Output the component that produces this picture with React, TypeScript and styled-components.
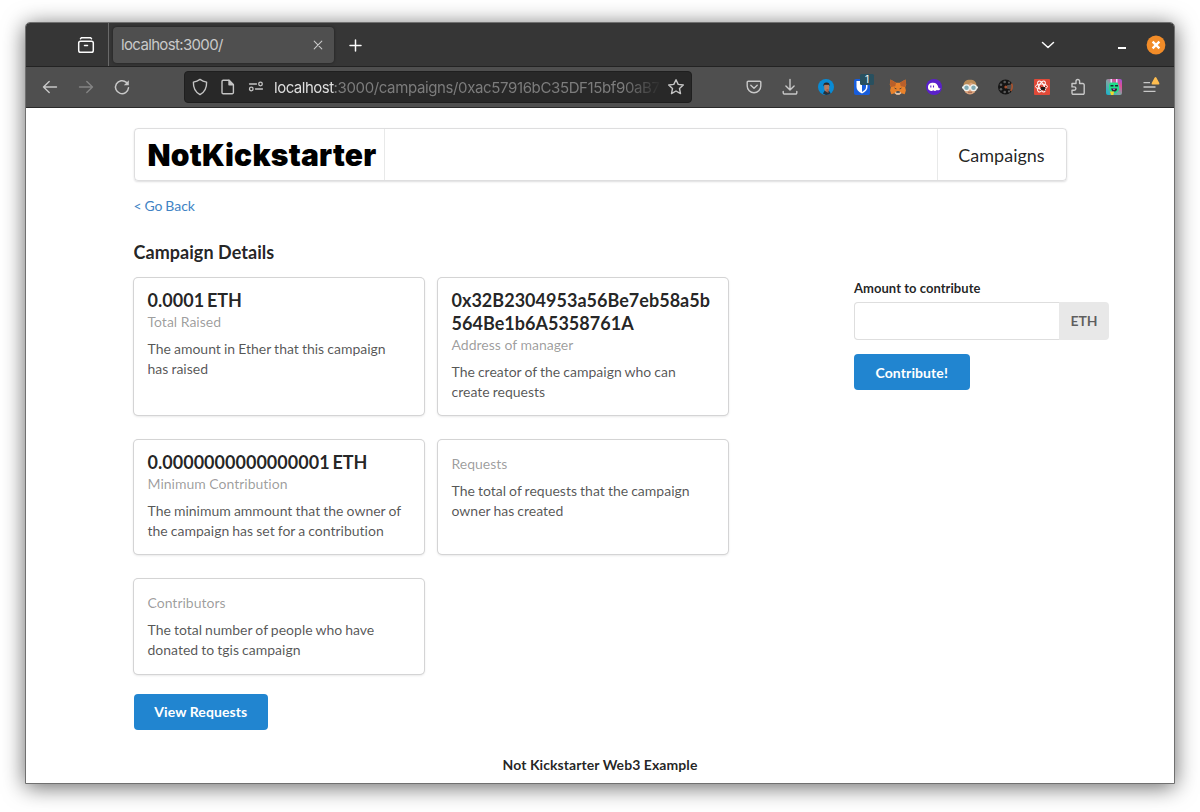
import React from 'react';
import styled, { createGlobalStyle } from 'styled-components';

const GlobalStyle = createGlobalStyle`
  *, *::before, *::after { box-sizing: border-box; }
  body {
    margin: 0;
    background: #fff;
    font-family: Lato, "Liberation Sans", sans-serif;
    font-size: 14px;
    line-height: 20px;
    font-variant-ligatures: none;
    color: rgba(0, 0, 0, 0.87);
  }
  h2, h3, h5, p { margin: 0; }
`;

/* ---------- browser window ---------- */

const Desktop = styled.div`
  height: 812px;
  padding: 22px 25px 28px;
  overflow: hidden;
`;

const Window = styled.div`
  height: 762px;
  display: flex;
  flex-direction: column;
  border: 1px solid #707070;
  border-radius: 5px 5px 0 0;
  overflow: hidden;
  background: #fff;
  box-shadow: 0 3px 22px rgba(0, 0, 0, 0.6);
`;

const TabBar = styled.div`
  height: 44px;
  display: flex;
  align-items: center;
  background: #363636;
  border-bottom: 1px solid #232323;
  color: #fbfbfb;
`;

const TabOverview = styled.div`
  width: 83px;
  height: 100%;
  display: flex;
  align-items: center;
  justify-content: flex-end;
  padding-right: 13px;
  border-right: 1px solid #696969;
`;

const Tab = styled.div`
  width: 221px;
  height: 36px;
  margin-left: 4px;
  padding: 0 10px 0 8px;
  display: flex;
  align-items: center;
  justify-content: space-between;
  border-radius: 4px;
  background: #4f4f4f;
  box-shadow: 0 0 3px rgba(0, 0, 0, 0.45);
  color: #c9c9c9;
`;

const TabTitle = styled.span`
  font-family: Inter, Roboto, sans-serif;
  font-size: 15px;
  letter-spacing: -0.65px;
`;

const NewTab = styled.div`
  display: flex;
  margin-left: 13px;
`;

const WindowControls = styled.div`
  margin-left: auto;
  display: flex;
  align-items: center;
  padding-right: 8px;
`;

const ControlSlot = styled.div<{ $gap: number }>`
  display: flex;
  margin-left: ${(p) => p.$gap}px;
`;

const NavBar = styled.div`
  height: 41px;
  display: flex;
  align-items: center;
  padding: 0 6px;
  background: #4f4f4f;
  border-bottom: 1px solid #2a2a2a;
`;

const ToolButton = styled.div<{ $dim?: boolean }>`
  width: 36px;
  height: 36px;
  display: grid;
  place-items: center;
  color: ${(p) => (p.$dim ? '#848484' : '#c8c8c8')};
`;

const AddressBar = styled.div`
  width: 508px;
  height: 32px;
  margin: 0 auto 0 44px;
  display: flex;
  align-items: center;
  border: 1px solid #1f1f1f;
  border-radius: 4px;
  background: #282828;
  color: #c4c4c4;
`;

const AddressIcon = styled.div`
  width: 28px;
  display: grid;
  place-items: center;
  &:first-child { margin-left: 1px; }
`;

const Url = styled.div`
  width: 388px;
  margin-left: 4px;
  padding-top: 2px;
  white-space: nowrap;
  font-family: Inter, Roboto, sans-serif;
  font-size: 15px;
  letter-spacing: -0.37px;
  color: #7c7c7c;
  mask-image: linear-gradient(to right, #000 350px, transparent 388px);
`;

const Host = styled.span`
  letter-spacing: -0.5px;
  color: #dedede;
`;

/* ---------- page ---------- */

const Page = styled.main`
  flex: 1;
  padding: 20px 65px 0 108px;
`;

const Menu = styled.nav`
  width: 933px;
  height: 53px;
  display: flex;
  justify-content: space-between;
  border: 1px solid rgba(34, 36, 38, 0.15);
  border-radius: 4px;
  box-shadow: 0 1px 2px rgba(34, 36, 38, 0.15);
`;

const Brand = styled.div`
  width: 250px;
  padding-left: 12.5px;
  display: flex;
  align-items: center;
  border-right: 1px solid rgba(34, 36, 38, 0.1);
  font-family: Inter, Lato, sans-serif;
  font-size: 30px;
  font-weight: 900;
  letter-spacing: 0.2px;
  line-height: 50px;
  white-space: nowrap;
  color: #000;
`;

const MenuItem = styled.div`
  width: 129px;
  padding-right: 1px;
  display: flex;
  align-items: center;
  justify-content: center;
  border-left: 1px solid rgba(34, 36, 38, 0.1);
  font-size: 18px;
`;

const BackLink = styled.a`
  display: block;
  margin: 15px 0 0 -0.5px;
  word-spacing: -0.8px;
  color: #4183c4;
`;

const PageTitle = styled.h3`
  margin: 24px 0 0 -0.5px;
  font-size: 18px;
  line-height: 24px;
  font-weight: 700;
  letter-spacing: 0.05px;
`;

const Columns = styled.div`
  display: flex;
  margin-top: 14px;
`;

const CardGrid = styled.div`
  width: 594px;
  display: grid;
  grid-template-columns: 290px 290px;
  column-gap: 14px;
  row-gap: 25px;
`;

const Card = styled.article`
  padding: 14px 14px 14px 13.5px;
  border-radius: 4px;
  box-shadow: 0 1px 3px 0 #d4d4d5, 0 0 0 1px #d4d4d5;
`;

const CardHeader = styled.h2`
  margin: -3px 0 -0.5px;
  font-size: 18px;
  line-height: 23.14px;
  font-weight: 700;
  word-spacing: -1.6px;
  letter-spacing: 0.02px;
  overflow-wrap: anywhere;
`;

const CardMeta = styled.div`
  color: rgba(0, 0, 0, 0.4);
`;

const CardText = styled.p`
  margin: 7px 4px 0 0;
  word-spacing: -0.5px;
  color: rgba(0, 0, 0, 0.68);

  ${CardHeader} ~ & {
    margin-bottom: -0.6px;
  }
`;

const Form = styled.form`
  width: 255px;
  margin-left: 126px;
  padding-top: 1px;
`;

const Label = styled.label`
  display: block;
  font-size: 13px;
  line-height: 19px;
  font-weight: 700;
  margin-bottom: 4px;
  letter-spacing: 0.04px;
`;

const InputGroup = styled.div`
  display: flex;
  height: 38px;
  margin-bottom: 14px;
`;

const Input = styled.input`
  width: 205px;
  padding: 9px 14px;
  border: 1px solid rgba(34, 36, 38, 0.15);
  border-right: 0;
  border-radius: 4px 0 0 4px;
  outline: 0;
  background: #fff;
  font: inherit;
`;

const Unit = styled.div`
  width: 50px;
  display: grid;
  place-items: center;
  border-radius: 0 4px 4px 0;
  background: #e8e8e8;
  color: rgba(0, 0, 0, 0.6);
  font-weight: 700;
`;

const Button = styled.button<{ $width: number; $drop?: number }>`
  display: block;
  width: ${(p) => p.$width}px;
  height: 36px;
  padding: ${(p) => p.$drop ?? 0}px 0.5px 0 0;
  border: 0;
  border-radius: 4px;
  background: #2185d0;
  color: #fff;
  font: 700 14px/14px Lato, sans-serif;
  font-variant-ligatures: none;
  letter-spacing: 0.1px;
`;

const Actions = styled.div`
  margin-top: 20px;
`;

const Footer = styled.h5`
  width: 932px;
  margin-top: 25px;
  font-size: 14px;
  line-height: 20px;
  font-weight: 700;
  letter-spacing: 0.07px;
  text-align: center;
`;

/* ---------- icons ---------- */

type IconProps = { w?: number; h?: number; sw?: number; children: React.ReactNode };

const Icon = ({ w = 18, h = 18, sw = 1.4, children }: IconProps) => (
  <svg
    width={w}
    height={h}
    viewBox={`0 0 ${w} ${h}`}
    fill="none"
    stroke="currentColor"
    strokeWidth={sw}
    strokeLinecap="round"
    strokeLinejoin="round"
    display="block"
  >
    {children}
  </svg>
);

const ArchiveIcon = () => (
  <Icon sw={1.5}>
    <path d="M3.500 2.800 4.400 1.800h9.200l.9 1" />
    <rect x="1.700" y="5.200" width="14.600" height="11" rx="1.800" />
    <path d="M7.500 9.500h3" />
  </Icon>
);

const BackIcon = () => <Icon><path d="M15.500 9H2.500M8.200 3.500 2.500 9l5.700 5.500" /></Icon>;
const ForwardIcon = () => <Icon><path d="M2.500 9h13M9.800 3.500 15.500 9l-5.700 5.500" /></Icon>;

const ReloadIcon = () => (
  <Icon sw={1.5}>
    <path d="M15.500 9.800A6.500 6.500 0 1 1 13.400 4.400" />
    <path d="M15.800 2.200v5h-5z" fill="currentColor" stroke="none" />
  </Icon>
);

const ShieldIcon = () => (
  <Icon><path d="M9 1.400c2 1.500 4 2.300 6.600 2.700.2 5.400-1.400 9.800-6.600 12.500C3.800 13.900 2.200 9.500 2.400 4.100 5 3.700 7 2.900 9 1.400z" /></Icon>
);

const PageIcon = () => (
  <Icon>
    <path d="M4.200 2.200h5.700l4.500 4.500v7.800a1.200 1.200 0 0 1-1.200 1.200h-9A1.200 1.200 0 0 1 3 14.500V3.400a1.200 1.200 0 0 1 1.200-1.200z" />
    <path d="M10 2.200v4.500h4.400z" fill="currentColor" />
  </Icon>
);

const PermissionsIcon = () => (
  <Icon sw={1.3}>
    <path d="M2.500 6h7M8.500 11h7" />
    <circle cx="13.500" cy="6" r="1.800" />
    <circle cx="4.300" cy="11" r="1.800" />
  </Icon>
);

const StarIcon = () => (
  <Icon><path d="m9 1.700 2.200 4.700 5.100.6-3.800 3.500 1 5.100L9 13l-4.500 2.600 1-5.100L1.700 7l5.100-.6z" /></Icon>
);

const PocketIcon = () => (
  <Icon>
    <path d="M3.200 3.200h11.600a1 1 0 0 1 1 1V8a6.800 6.800 0 0 1-13.600 0V4.200a1 1 0 0 1 1-1z" />
    <path d="m5.800 7.300 3.200 3 3.200-3" />
  </Icon>
);

const DownloadIcon = () => (
  <Icon><path d="M9 1.500v10.300M4.900 8 9 12l4.100-4M2.200 13.500v1.300a1.200 1.200 0 0 0 1.200 1.200h11.200a1.200 1.200 0 0 0 1.200-1.200v-1.300" /></Icon>
);

const PuzzleIcon = () => (
  <Icon>
    <path d="M3 5.500h4V3.300a1.800 1.800 0 0 1 3.600 0v2.200h3.200a1.400 1.400 0 0 1 1.400 1.400v8.200a1.200 1.200 0 0 1-1.200 1.200H4.200A1.200 1.200 0 0 1 3 15.100v-2.800h2.200a1.700 1.700 0 0 0 0-3.400H3z" />
  </Icon>
);

const AvatarIcon = () => (
  <svg width="16" height="16" viewBox="0 0 16 16">
    <circle cx="8" cy="8" r="8" fill="#098bd5" />
    <path d="M5 14.500 6.700 11.500h4l2 2.800A8 8 0 0 1 8 16z" fill="#24313c" />
    <path d="M6.200 5.500h5v4.200c0 2-1.100 3-2.400 3S6.200 11.500 6.200 9.500z" fill="#b57c61" />
    <path d="M5.500 7.500C5 4.700 6.200 3.500 8.500 3.500c2.600 0 3.500 1.300 3 3.800l-.8-1.500H6.500z" fill="#30221f" />
    <path d="M8.500 10h2v4l-2-1z" fill="#a3624b" />
  </svg>
);

const VaultIcon = () => (
  <svg width="26" height="26" viewBox="0 0 26 26">
    <rect x="5" y="5" width="16" height="16" rx="2" fill="#175ddc" />
    <path d="M7.500 7h11v6c0 3-2.200 5-5.500 6.600C9.700 18 7.500 16 7.500 13z" fill="#fff" />
    <path d="M13 8.600h4V13c0 2-1.500 3.600-4 4.900z" fill="#175ddc" />
    <rect x="11" y="0" width="14" height="11" rx="1.500" fill="#28505f" />
    <text x="18" y="9.200" fill="#fff" fontSize="10" fontFamily="Inter, sans-serif" textAnchor="middle">1</text>
  </svg>
);

const FoxIcon = () => (
  <svg width="18" height="18" viewBox="0 0 18 18">
    <path d="m1.500 1.500 5.600 3.200h3.800l5.600-3.200.7 5-1 2.800.7 3.200-1.200 3.700-3.300-.9-2 1.500H7.600l-2-1.500-3.300.9L1.100 12.500l.7-3.200-1-2.800z" fill="#e9822b" />
    <path d="m1.500 1.500 5.600 3.200-.8 3.600-4.200.8L.8 6.500zM16.500 1.500l-5.600 3.200.8 3.600 4.200.8 1.300-2.600z" fill="#b9602b" />
    <path d="m5.600 15.300 1.500-1.800h3.800l1.500 1.800-2 1.500H7.600z" fill="#d9c5b4" />
    <path d="m4.800 9.500 2.600 1-.2 1zM13.200 9.500l-2.600 1 .2 1zM7.400 13.200h3.200l.2 1.600H7.200z" fill="#273440" />
  </svg>
);

const GhostIcon = () => (
  <svg width="16" height="16" viewBox="0 0 16 16">
    <circle cx="8" cy="8" r="8" fill="#5a20cb" />
    <path d="M2 8.300C2 5 4.200 3.700 7 3.700c3.200 0 4.800 2 5.300 4.600.3 1 1 1.300 2.200 1.100-.8 1.700-2.200 2.300-3.700 1.600-1.300 1.500-2.700 1-3.500.3-1.300 1-2.600.7-3.200.1C2.700 11.600 2 10 2 8.300z" fill="#fffdf8" />
    <path d="M4.800 6.500v2M7.500 6.500v2" stroke="#5a20cb" strokeWidth="1.100" />
  </svg>
);

const GogglesIcon = () => (
  <svg width="16" height="16" viewBox="0 0 16 16">
    <ellipse cx="8" cy="8.500" rx="6.500" ry="7" fill="#d9a27c" />
    <path d="M1.500 7.500C1.300 2.500 4 .8 8 .8s6.700 1.700 6.500 6.700C12 6 10.500 4.500 9 3.500 7 5.300 4 6 1.500 7.500z" fill="#b98b58" />
    <path d="M0 7.500h16v2H0z" fill="#e5eceb" />
    <circle cx="4.500" cy="8.700" r="2.900" fill="#7fa9b3" stroke="#f1f3f0" strokeWidth="1.300" />
    <circle cx="11.500" cy="8.700" r="2.900" fill="#7fa9b3" stroke="#f1f3f0" strokeWidth="1.300" />
    <path d="M6 13.200h4" stroke="#9a5c48" />
  </svg>
);

const ReelIcon = () => (
  <svg width="16" height="16" viewBox="0 0 16 16">
    <circle cx="7.500" cy="8" r="7.500" fill="#151515" />
    <path d="M9 6.200 15 5v6L9 9.800z" fill="#4f4f4f" />
    <g fill="#5c5c5c">
      <circle cx="6.700" cy="3" r="1.300" />
      <circle cx="3" cy="5.700" r="1.300" />
      <circle cx="3" cy="10.300" r="1.300" />
      <circle cx="6.700" cy="13" r="1.300" />
      <circle cx="11" cy="3.600" r="1.100" />
      <circle cx="11" cy="12.400" r="1.100" />
    </g>
    <circle cx="7.800" cy="8" r="1.500" fill="#a75130" />
    <path d="M13.500 4.500c1.200 2.500.9 5-.8 7.500" fill="none" stroke="#a8532e" strokeWidth="1.700" />
  </svg>
);

const AtomIcon = () => (
  <svg width="16" height="16" viewBox="0 0 16 16">
    <rect width="16" height="16" rx="1" fill="#e04938" />
    <g fill="none" stroke="#fff" strokeWidth="1">
      <ellipse cx="7.500" cy="7.500" rx="6" ry="2.500" />
      <ellipse cx="7.500" cy="7.500" rx="6" ry="2.500" transform="rotate(60 7.500 7.500)" />
      <ellipse cx="7.500" cy="7.500" rx="6" ry="2.500" transform="rotate(120 7.500 7.500)" />
    </g>
    <ellipse cx="9" cy="9.500" rx="2.500" ry="1.800" fill="#231917" />
    <path d="m6.500 7.500 2 2M11.500 7.500l-2 2M6.500 11.500l2-1.500M11.500 12l-2-2" stroke="#231917" strokeWidth="1" />
  </svg>
);

const PixelPetIcon = () => (
  <svg width="16" height="16" viewBox="0 0 16 16">
    <defs>
      <linearGradient id="pet" x1="0" y1="1" x2="1" y2="0">
        <stop offset="0" stopColor="#0eb5cf" />
        <stop offset=".45" stopColor="#79a9a5" />
        <stop offset=".75" stopColor="#df4e98" />
        <stop offset="1" stopColor="#9651dd" />
      </linearGradient>
    </defs>
    <rect width="16" height="16" rx="2" fill="url(#pet)" />
    <path d="M4 3.500h8V5l1 2v4l-3 3H6l-3-3V6z" fill="#20df8c" />
    <path d="M4.500 0H6v3.500H4.500zM10 0h1.500v3.500H10z" fill="#e2dfff" />
    <path d="M4.500 6h3v1.600h-3zM9 6h3v1.600H9z" fill="#182a32" />
    <path d="M5 9.500h6v1.500L9.500 12.500h-3z" fill="#351f35" />
    <path d="M7 9.700h2v1H7z" fill="#c67cf0" />
    <path d="M4 12.500h4L7.500 16H5z" fill="#efd72d" />
  </svg>
);

const MenuAlertIcon = () => (
  <svg width="24" height="26" viewBox="0 0 24 26">
    <path d="M5.500 8.700H12M5.500 13h12M5.500 17.300h12" stroke="#c8c8c8" strokeWidth="1.300" />
    <path d="M16.700 3.500a.9.9 0 0 1 1.600 0l3 5.500q.5 1.500-.8 1.500h-6q-1.300 0-.8-1.500z" fill="#ffbd4f" />
  </svg>
);

const toolbar: React.ComponentType[] = [
  PocketIcon, DownloadIcon, AvatarIcon, VaultIcon, FoxIcon, GhostIcon,
  GogglesIcon, ReelIcon, AtomIcon, PuzzleIcon, PixelPetIcon, MenuAlertIcon,
];

const cards = [
  { header: '0.0001 ETH', meta: 'Total Raised', text: 'The amount in Ether that this campaign has raised' },
  {
    header: '0x32B2304953a56Be7eb58a5b564Be1b6A5358761A',
    meta: 'Address of manager',
    text: 'The creator of the campaign who can create requests',
  },
  {
    header: '0.0000000000000001 ETH',
    meta: 'Minimum Contribution',
    text: 'The minimum ammount that the owner of the campaign has set for a contribution',
  },
  { meta: 'Requests', text: 'The total of requests that the campaign owner has created' },
  { meta: 'Contributors', text: 'The total number of people who have donated to tgis campaign' },
];

export default function App() {
  return (
    <Desktop>
      <GlobalStyle />
      <Window>
        <TabBar>
          <TabOverview><ArchiveIcon /></TabOverview>
          <Tab>
            <TabTitle>localhost:3000/</TabTitle>
            <Icon w={12} h={12} sw={1.1}><path d="m2.200 2.200 7.600 7.600M9.800 2.200 2.200 9.800" /></Icon>
          </Tab>
          <NewTab><Icon w={16} h={16} sw={1.5}><path d="M8.500 3v11M3 8.500h11" /></Icon></NewTab>
          <WindowControls>
            <Icon w={16} h={16} sw={1.5}><path d="m2.500 5.500 5.500 5 5.500-5" /></Icon>
            <ControlSlot $gap={58}>
              <svg width="16" height="16"><path d="M4 10h8v2H4z" fill="#fff" /></svg>
            </ControlSlot>
            <ControlSlot $gap={16}>
              <svg width="20" height="20">
                <circle cx="10" cy="10" r="9.400" fill="#f28c28" />
                <path d="m6.600 6.600 6.800 6.800M13.400 6.600l-6.800 6.800" stroke="#fff" strokeWidth="2.300" />
              </svg>
            </ControlSlot>
          </WindowControls>
        </TabBar>
        <NavBar>
          <ToolButton><BackIcon /></ToolButton>
          <ToolButton $dim><ForwardIcon /></ToolButton>
          <ToolButton><ReloadIcon /></ToolButton>
          <AddressBar>
            <AddressIcon><ShieldIcon /></AddressIcon>
            <AddressIcon><PageIcon /></AddressIcon>
            <AddressIcon><PermissionsIcon /></AddressIcon>
            <Url><Host>localhost</Host>:3000/campaigns/0xac57916bC35DF15bf90aB7</Url>
            <AddressIcon><StarIcon /></AddressIcon>
          </AddressBar>
          {toolbar.map((Glyph, i) => (
            <ToolButton key={i}><Glyph /></ToolButton>
          ))}
        </NavBar>
        <Page>
          <Menu>
            <Brand>NotKickstarter</Brand>
            <MenuItem>Campaigns</MenuItem>
          </Menu>
          <BackLink>&lt; Go Back</BackLink>
          <PageTitle>Campaign Details</PageTitle>
          <Columns>
            <CardGrid>
              {cards.map((card) => (
                <Card key={card.meta}>
                  {card.header && <CardHeader>{card.header}</CardHeader>}
                  <CardMeta>{card.meta}</CardMeta>
                  <CardText>{card.text}</CardText>
                </Card>
              ))}
            </CardGrid>
            <Form>
              <Label htmlFor="amount">Amount to contribute</Label>
              <InputGroup>
                <Input id="amount" />
                <Unit>ETH</Unit>
              </InputGroup>
              <Button type="button" $width={116} $drop={2}>Contribute!</Button>
            </Form>
          </Columns>
          <Actions><Button type="button" $width={134}>View Requests</Button></Actions>
          <Footer>Not Kickstarter Web3 Example</Footer>
        </Page>
      </Window>
    </Desktop>
  );
}
